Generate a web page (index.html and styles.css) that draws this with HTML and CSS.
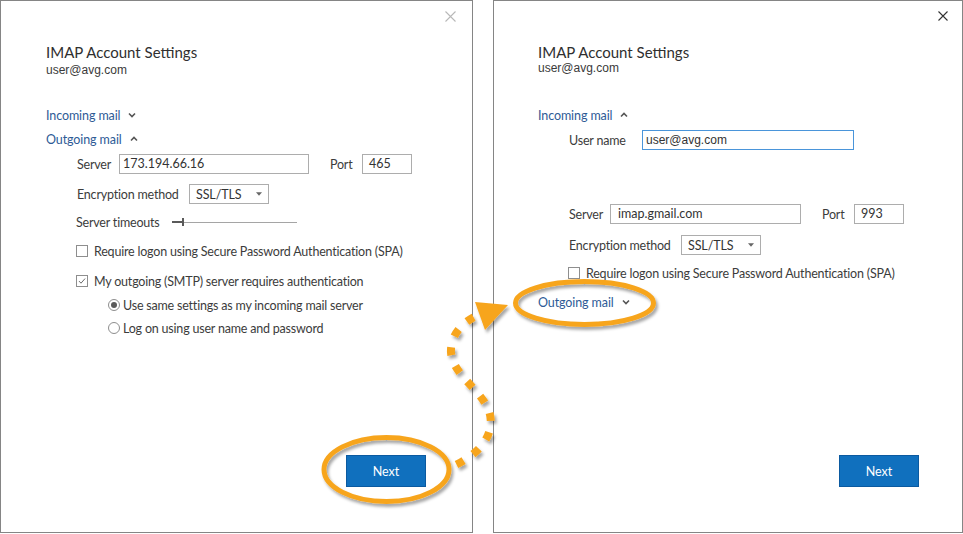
FILE: index.html
```html
<!DOCTYPE html>
<html>
<head>
<meta charset="utf-8">
<title>IMAP Account Settings</title>
<link rel="stylesheet" href="styles.css">
</head>
<body>
<div class="stage">
  <section class="dialog dialog-left">
    <div class="topbar">
      <svg class="close close-dim" width="11" height="11" viewBox="0 0 11 11"><path d="M0.5 0.5L10.5 10.5M10.5 0.5L0.5 10.5"/></svg>
    </div>
    <div class="content">
      <div class="title">IMAP Account Settings</div>
      <div class="account">user@avg.com</div>
      <div class="link link-first">Incoming mail <svg class="chev" viewBox="0 0 8 6"><path d="M1 1.5L4 4.5L7 1.5"/></svg></div>
      <div class="link link-second">Outgoing mail <svg class="chev" viewBox="0 0 8 6"><path d="M1 4.5L4 1.5L7 4.5"/></svg></div>
      <div class="form">
        <div class="row row-first">
          <span class="label lbl-server">Server</span>
          <span class="field field-server">173.194.66.16</span>
          <span class="label lbl-port">Port</span>
          <span class="field field-port">465</span>
        </div>
        <div class="row row-enc">
          <span class="label lbl-enc">Encryption method</span>
          <span class="select"><span>SSL/TLS</span><svg class="caret" viewBox="0 0 7 4"><path d="M0 0H7L3.5 4Z"/></svg></span>
        </div>
        <div class="row row-timeout">
          <span class="label lbl-timeout">Server timeouts</span>
          <span class="slider"><span class="slider-fill"></span><span class="slider-thumb"></span><span class="slider-track"></span></span>
        </div>
        <div class="row row-cb1">
          <span class="check"></span>
          <span class="label">Require logon using Secure Password Authentication (SPA)</span>
        </div>
        <div class="row row-cb2">
          <span class="check"><svg viewBox="0 0 11 11"><path d="M2.2 5.6L4.4 7.9L8.9 2.8"/></svg></span>
          <span class="label">My outgoing (SMTP) server requires authentication</span>
        </div>
        <div class="radios">
          <div class="row row-r1">
            <span class="radio radio-on"><span class="dot"></span></span>
            <span class="label">Use same settings as my incoming mail server</span>
          </div>
          <div class="row row-r2">
            <span class="radio"></span>
            <span class="label">Log on using user name and password</span>
          </div>
        </div>
      </div>
    </div>
    <div class="footer"><button class="next">Next</button></div>
  </section>

  <section class="dialog dialog-right">
    <div class="topbar">
      <svg class="close close-dark" width="10" height="10" viewBox="0 0 10 10"><path d="M0.5 0.5L9.5 9.5M9.5 0.5L0.5 9.5"/></svg>
    </div>
    <div class="content">
      <div class="title">IMAP Account Settings</div>
      <div class="account">user@avg.com</div>
      <div class="link link-first">Incoming mail <svg class="chev" viewBox="0 0 8 6"><path d="M1 4.5L4 1.5L7 4.5"/></svg></div>
      <div class="form">
        <div class="row row-user">
          <span class="label lbl-user">User name</span>
          <span class="field field-user">user@avg.com</span>
        </div>
        <div class="row row-server2">
          <span class="label lbl-server2">Server</span>
          <span class="field field-server2">imap.gmail.com</span>
          <span class="label lbl-port">Port</span>
          <span class="field field-port">993</span>
        </div>
        <div class="row row-enc2">
          <span class="label lbl-enc">Encryption method</span>
          <span class="select"><span>SSL/TLS</span><svg class="caret" viewBox="0 0 7 4"><path d="M0 0H7L3.5 4Z"/></svg></span>
        </div>
        <div class="row row-cb3">
          <span class="check"></span>
          <span class="label">Require logon using Secure Password Authentication (SPA)</span>
        </div>
      </div>
      <div class="link link-out">Outgoing mail <svg class="chev" viewBox="0 0 8 6"><path d="M1 1.5L4 4.5L7 1.5"/></svg></div>
    </div>
    <div class="footer"><button class="next">Next</button></div>
  </section>

  <svg class="annotation" width="963" height="534" viewBox="0 0 963 534">
    <defs>
      <filter id="shadow" x="-20%" y="-20%" width="140%" height="140%">
        <feDropShadow dx="2" dy="3" stdDeviation="1.6" flood-color="#000" flood-opacity="0.35"/>
      </filter>
    </defs>
    <g filter="url(#shadow)" class="marks">
      <ellipse cx="386.5" cy="469.5" rx="62.5" ry="32" class="ring"/>
      <ellipse cx="584.5" cy="303" rx="69" ry="21.5" class="ring"/>
      <path class="dots" d="M456.5,464.5 C482,452 496,432 489,411 C481,389 449,372 451,349 C452,334 462,323 476,316"/>
      <polygon class="head" points="475,302 508,305 485,330"/>
    </g>
  </svg>
</div>
</body>
</html>
```
FILE: styles.css
```css
* { box-sizing: border-box; margin: 0; padding: 0; }
html, body { width: 963px; height: 534px; overflow: hidden; background: #fff; }
body { font-family: "Lato", "Open Sans", sans-serif; font-size: 12.5px; color: #3a3a3a; }

.stage { position: relative; display: flex; gap: 20px; width: 963px; height: 534px; }

.dialog { display: flex; flex-direction: column; height: 533px; border: 1px solid #858585; background: #fff; }
.dialog-left { width: 473px; }
.dialog-right { width: 470px; }

.topbar { height: 30px; display: flex; justify-content: flex-end; align-items: flex-start; padding-top: 10px; }
.dialog-left .topbar { padding-right: 16px; }
.dialog-right .topbar { padding-right: 14px; }
.close { display: block; }
.close path { fill: none; stroke-width: 1.1; }
.close-dim path { stroke: #b8b8b8; }
.close-dark path { stroke: #333; }

.content { padding-left: 45px; }
.dialog-right .content { padding-left: 44px; }

.title { margin-top: 11px; height: 20px; line-height: 20px; font-size: 15px; color: #2f2f2f; white-space: nowrap; }
.account { height: 16px; line-height: 16px; font-family: "Liberation Sans", Arial, sans-serif; font-size: 12px; color: #3a3a3a; }
.dialog-right .account { margin-top: -2px; }

.link { display: flex; align-items: center; height: 20px; color: #2e5b96; font-size: 12.5px; letter-spacing: -0.1px; white-space: nowrap; }
.link-first { margin-top: 27px; }
.dialog-right .link-first { margin-top: 29px; }
.link-second { margin-top: 4px; }
.link-out { margin-top: 9px; }
.chev { width: 8px; height: 6px; margin-left: 8px; }
.chev path { fill: none; stroke: #555; stroke-width: 1.6; }

.form { padding-left: 31px; }
.row { display: flex; align-items: center; height: 20px; white-space: nowrap; }
.label { color: #3c3c3c; font-size: 12.5px; letter-spacing: -0.2px; }

.field { height: 20px; border: 1px solid #adadad; padding-left: 3px; line-height: 18px; font-size: 12.5px; color: #333; }

.row-first { margin-top: 5px; }
.lbl-server { width: 42px; }
.field-server { width: 190px; }
.lbl-port { width: 32px; margin-left: 21px; }
.field-port { width: 50px; padding-left: 6px; }

.row-enc { margin-top: 10px; }
.lbl-enc { width: 112px; }
.select { display: flex; align-items: center; justify-content: space-between; width: 80px; height: 20px; border: 1px solid #adadad; padding: 0 6px 0 6px; font-size: 12.5px; letter-spacing: -0.1px; color: #333; }
.caret { width: 6px; height: 4px; }
.caret path { fill: #666; }

.row-timeout { margin-top: 8px; }
.lbl-timeout { width: 96px; margin-left: -1px; }
.slider { display: flex; align-items: center; width: 125px; height: 20px; }
.slider-fill { width: 10px; height: 2px; background: #5a5a5a; }
.slider-thumb { width: 2px; height: 8px; background: #5a5a5a; margin-top: -1px; }
.slider-track { flex: 1; height: 1px; background: #a5a5a5; }

.check { display: flex; align-items: center; justify-content: center; width: 12px; height: 12px; border: 1px solid #8e8e8e; margin-left: -1px; margin-right: 6px; background: #fff; }
.check svg { width: 10px; height: 10px; }
.check path { fill: none; stroke: #6a6a6a; stroke-width: 1.1; }
.row-cb1 { margin-top: 9px; }
.row-cb2 { margin-top: 10px; }

.radios { padding-left: 31px; }
.row-r1 { margin-top: 4px; }
.row-r2 { margin-top: 3px; }
.radio { display: flex; align-items: center; justify-content: center; width: 12px; height: 12px; border: 1px solid #8e8e8e; border-radius: 50%; margin-right: 3px; }
.dot { width: 6px; height: 6px; border-radius: 50%; background: #5a5a5a; }

.row-user { margin-top: 5px; }
.lbl-user { width: 73px; }
.field-user { width: 212px; border-color: #4a95da; font-family: "Liberation Sans", Arial, sans-serif; font-size: 12px; }
.row-server2 { margin-top: 54px; }
.lbl-server2 { width: 41px; }
.field-server2 { width: 191px; padding-left: 7px; }
.row-enc2 { margin-top: 11px; }
.row-cb3 { margin-top: 8px; }

.footer { margin-top: auto; display: flex; justify-content: flex-end; padding-bottom: 45px; }
.dialog-left .footer { padding-right: 46px; }
.dialog-right .footer { padding-right: 43px; }
.next { width: 80px; height: 32px; background: #1070be; border: 1px solid #0b5aa0; color: #fff; font-family: "Lato", "Open Sans", sans-serif; font-size: 12.5px; }

.annotation { position: absolute; left: 0; top: 0; pointer-events: none; }
.ring { fill: none; stroke: #f7a51f; stroke-width: 5; }
.dots { fill: none; stroke: #f7a51f; stroke-width: 8; stroke-dasharray: 8 11.5; stroke-linecap: butt; }
.head { fill: #f7a51f; }
```
